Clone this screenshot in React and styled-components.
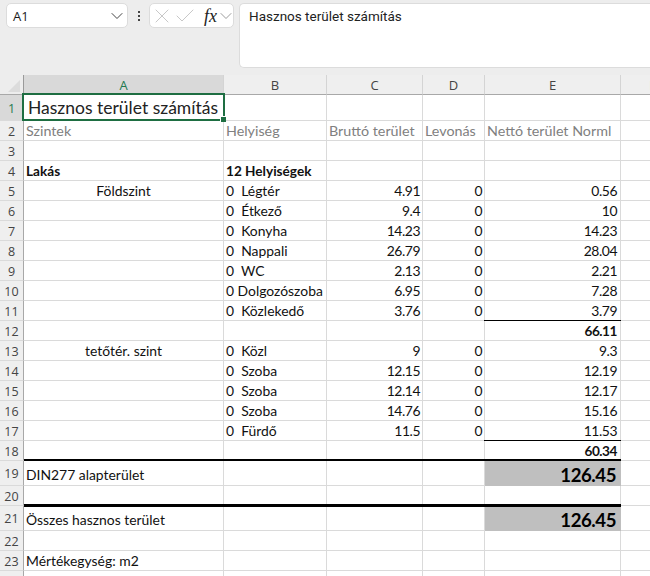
import React from 'react';
import styled, { createGlobalStyle } from 'styled-components';
import { ChevronDown, X, Check } from 'lucide-react';

const Global = createGlobalStyle`
  html, body { margin: 0; padding: 0; background: #ededed; overflow: hidden; }
  body { width: 650px; height: 576px; }
`;

const Page = styled.div`
  width: 650px;
  height: 576px;
  overflow: hidden;
  background: #ededed;
  font-family: Lato, "Liberation Sans", sans-serif;
  color: #1a1a1a;
`;

const Toolbar = styled.div`
  height: 75px;
  box-sizing: border-box;
  padding: 3px 0 0 6px;
  display: flex;
  align-items: flex-start;
  background: #ededed;
`;

const NameBox = styled.div`
  width: 122px;
  height: 25px;
  box-sizing: border-box;
  background: #fff;
  border: 1px solid #dcdcdc;
  border-radius: 5px;
  padding: 0 0 0 6px;
  display: flex;
  align-items: center;
  justify-content: space-between;
  font-family: "Open Sans", sans-serif;
  font-size: 13px;
`;

const Dots = styled.div`
  width: 21px;
  height: 25px;
  display: flex;
  flex-direction: column;
  align-items: center;
  justify-content: center;
  gap: 2px;
  span {
    width: 2px;
    height: 2px;
    background: #444;
  }
`;

const FxBox = styled.div`
  width: 85px;
  height: 25px;
  box-sizing: border-box;
  background: #fff;
  border: 1px solid #dcdcdc;
  border-radius: 5px;
  display: flex;
  align-items: center;
  color: #c8c8c8;
  svg {
    flex-shrink: 0;
  }
`;

const ConfirmIcon = styled(Check)`
  margin-left: -1px;
`;

const Fx = styled.i`
  font-family: "Liberation Serif", serif;
  font-size: 18px;
  color: #222;
  margin-left: 7px;
  line-height: 1;
`;

const FxChevron = styled(ChevronDown)`
  margin-left: -1px;
`;

const FormulaBar = styled.div`
  margin-left: 5px;
  flex: 1;
  height: 65px;
  box-sizing: border-box;
  background: #fff;
  border: 1px solid #dcdcdc;
  border-right: none;
  border-radius: 5px 0 0 5px;
  padding: 4px 9px;
  font-family: Roboto, sans-serif;
  font-size: 13.5px;
  line-height: 16px;
  color: #222;
`;

const Sheet = styled.div`
  display: grid;
  grid-template-columns: 24px 200px 103px 96px 62px 136px 64px;
  grid-auto-rows: auto;
  background: #fff;
`;

const Corner = styled.div`
  height: 20px;
  background: #ededed;
  border-right: 1px solid #9a9a9a;
  border-bottom: 1px solid #a8a8a8;
  box-sizing: border-box;
  position: relative;
  &::after {
    content: '';
    position: absolute;
    right: 3px;
    bottom: 2px;
    border-style: solid;
    border-width: 0 0 12px 12px;
    border-color: transparent transparent #dcdcdc transparent;
  }
`;

const ColHead = styled.div`
  height: 20px;
  box-sizing: border-box;
  background: ${(p) => (p.$active ? '#d9d9d9' : '#efefef')};
  color: ${(p) => (p.$active ? '#1f7a50' : '#444')};
  border-right: 1px solid #d4d4d4;
  border-bottom: 1px solid #a8a8a8;
  font-family: "Open Sans", sans-serif;
  font-size: 13px;
  text-align: center;
  line-height: 20px;
`;

const RowHead = styled.div`
  height: ${(p) => p.$h}px;
  box-sizing: border-box;
  background: ${(p) => (p.$active ? '#d9d9d9' : '#efefef')};
  color: ${(p) => (p.$active ? '#1f7a50' : '#444')};
  border-right: 1px solid #a8a8a8;
  border-bottom: 1px solid #dadada;
  font-family: "Open Sans", sans-serif;
  font-size: 12.5px;
  text-align: center;
  line-height: ${(p) => p.$h + 1}px;
`;

const Cell = styled.div`
  height: ${(p) => p.$h}px;
  box-sizing: border-box;
  position: relative;
  background: ${(p) => (p.$fill ? '#bfbfbf' : '#fff')};
  border-right: 1px solid ${(p) => (p.$fill ? '#bfbfbf' : '#dadada')};
  border-bottom: 1px solid ${(p) => (p.$fill ? '#bfbfbf' : '#dadada')};
  padding: 0 ${(p) => (p.$big ? 4 : p.$wide ? 3 : 2)}px 0 2px;
  white-space: pre;
  font-size: ${(p) => (p.$big ? 18.6 : p.$muted ? 14.3 : p.$bold ? 13.6 : 13.9)}px;
  font-weight: ${(p) => (p.$bold ? 700 : 400)};
  letter-spacing: ${(p) => (p.$num ? '-0.45px' : '0')};
  text-align: ${(p) => p.$align || 'left'};
  line-height: ${(p) => (p.$h > 20 ? p.$h + 3 : p.$h)}px;
  color: ${(p) => (p.$big ? '#000' : p.$muted ? '#808080' : '#111')};
`;

const Selected = styled(Cell)`
  font-size: 17.5px;
  line-height: 26px;
  padding-left: 4px;
  color: #222;
  z-index: 3;
  &::after {
    content: '';
    position: absolute;
    inset: -2px -2px -1px -2px;
    border: 2px solid #1e6e42;
  }
  &::before {
    content: '';
    position: absolute;
    right: -3px;
    bottom: -2px;
    width: 6px;
    height: 6px;
    background: #1e6e42;
    border-left: 1px solid #fff;
    border-top: 1px solid #fff;
    box-sizing: border-box;
    z-index: 2;
  }
`;

const Rule = styled.div`
  position: absolute;
  left: ${(p) => (p.$first ? 0 : -1)}px;
  right: -1px;
  bottom: ${(p) => (p.$w > 2 ? -2 : -1)}px;
  height: ${(p) => p.$w}px;
  background: #000;
  z-index: 1;
`;

const rows = [
  { n: 1, h: 26 },
  { n: 2, a: 'Szintek', b: 'Helyiség', c: 'Bruttó terület', d: 'Levonás', e: 'Nettó terület Norml', muted: true },
  { n: 3 },
  { n: 4, a: 'Lakás', b: '12 Helyiségek', bold: true },
  { n: 5, a: 'Földszint', center: true, b: '0  Légtér', c: '4.91', d: '0', e: '0.56' },
  { n: 6, b: '0  Étkező', c: '9.4', d: '0', e: '10' },
  { n: 7, b: '0  Konyha', c: '14.23', d: '0', e: '14.23' },
  { n: 8, b: '0  Nappali', c: '26.79', d: '0', e: '28.04' },
  { n: 9, b: '0  WC', c: '2.13', d: '0', e: '2.21' },
  { n: 10, b: '0 Dolgozószoba', c: '6.95', d: '0', e: '7.28' },
  { n: 11, b: '0  Közlekedő', c: '3.76', d: '0', e: '3.79', eRule: 1 },
  { n: 12, e: '66.11', eBold: true },
  { n: 13, a: 'tetőtér. szint', center: true, b: '0  Közl', c: '9', d: '0', e: '9.3' },
  { n: 14, b: '0  Szoba', c: '12.15', d: '0', e: '12.19' },
  { n: 15, b: '0  Szoba', c: '12.14', d: '0', e: '12.17' },
  { n: 16, b: '0  Szoba', c: '14.76', d: '0', e: '15.16' },
  { n: 17, b: '0  Fürdő', c: '11.5', d: '0', e: '11.53', eRule: 1 },
  { n: 18, e: '60.34', eBold: true, rule: 2 },
  { n: 19, h: 25, a: 'DIN277 alapterület', e: '126.45', big: true },
  { n: 20, rule: 3 },
  { n: 21, h: 25, a: 'Összes hasznos terület', e: '126.45', big: true },
  { n: 22 },
  { n: 23, a: 'Mértékegység: m2' },
  { n: 24, hideNumber: true },
];

const columns = ['A', 'B', 'C', 'D', 'E', 'F'];

const SheetRow = ({ row }) => {
  const h = row.h || 20;
  const rule = (first) => (row.rule ? <Rule $w={row.rule} $first={first} /> : null);
  const align = row.muted ? 'left' : 'right';

  return (
    <>
      <RowHead $h={h} $active={row.n === 1}>{row.hideNumber ? '' : row.n}</RowHead>
      {row.n === 1 ? (
        <Selected $h={h}>Hasznos terület számítás</Selected>
      ) : (
        <Cell $h={h} $bold={row.bold} $muted={row.muted} $align={row.center ? 'center' : 'left'}>
          {row.a}
          {rule(true)}
        </Cell>
      )}
      <Cell $h={h} $bold={row.bold} $muted={row.muted}>
        {row.b}
        {rule()}
      </Cell>
      <Cell $h={h} $muted={row.muted} $num={!row.muted} $align={align}>
        {row.c}
        {rule()}
      </Cell>
      <Cell $h={h} $muted={row.muted} $num={!row.muted} $align={align}>
        {row.d}
        {rule()}
      </Cell>
      <Cell
        $h={h}
        $muted={row.muted}
        $num={!row.muted}
        $wide
        $bold={row.eBold || row.big}
        $big={row.big}
        $fill={row.big}
        $align={align}
      >
        {row.e}
        {row.eRule ? <Rule $w={1} /> : rule()}
      </Cell>
      <Cell $h={h} />
    </>
  );
};

const App = () => (
  <Page>
    <Global />
    <Toolbar>
      <NameBox>
        A1
        <ChevronDown size={20} strokeWidth={1.2} color="#444" />
      </NameBox>
      <Dots>
        <span />
        <span />
        <span />
      </Dots>
      <FxBox>
        <X size={24} strokeWidth={1} />
        <ConfirmIcon size={24} strokeWidth={1} />
        <Fx>fx</Fx>
        <FxChevron size={20} strokeWidth={1} color="#888" />
      </FxBox>
      <FormulaBar>Hasznos terület számítás</FormulaBar>
    </Toolbar>
    <Sheet>
      <Corner />
      {columns.map((c) => (
        <ColHead key={c} $active={c === 'A'}>{c}</ColHead>
      ))}
      {rows.map((row) => (
        <SheetRow key={row.n} row={row} />
      ))}
    </Sheet>
  </Page>
);

export default App;
